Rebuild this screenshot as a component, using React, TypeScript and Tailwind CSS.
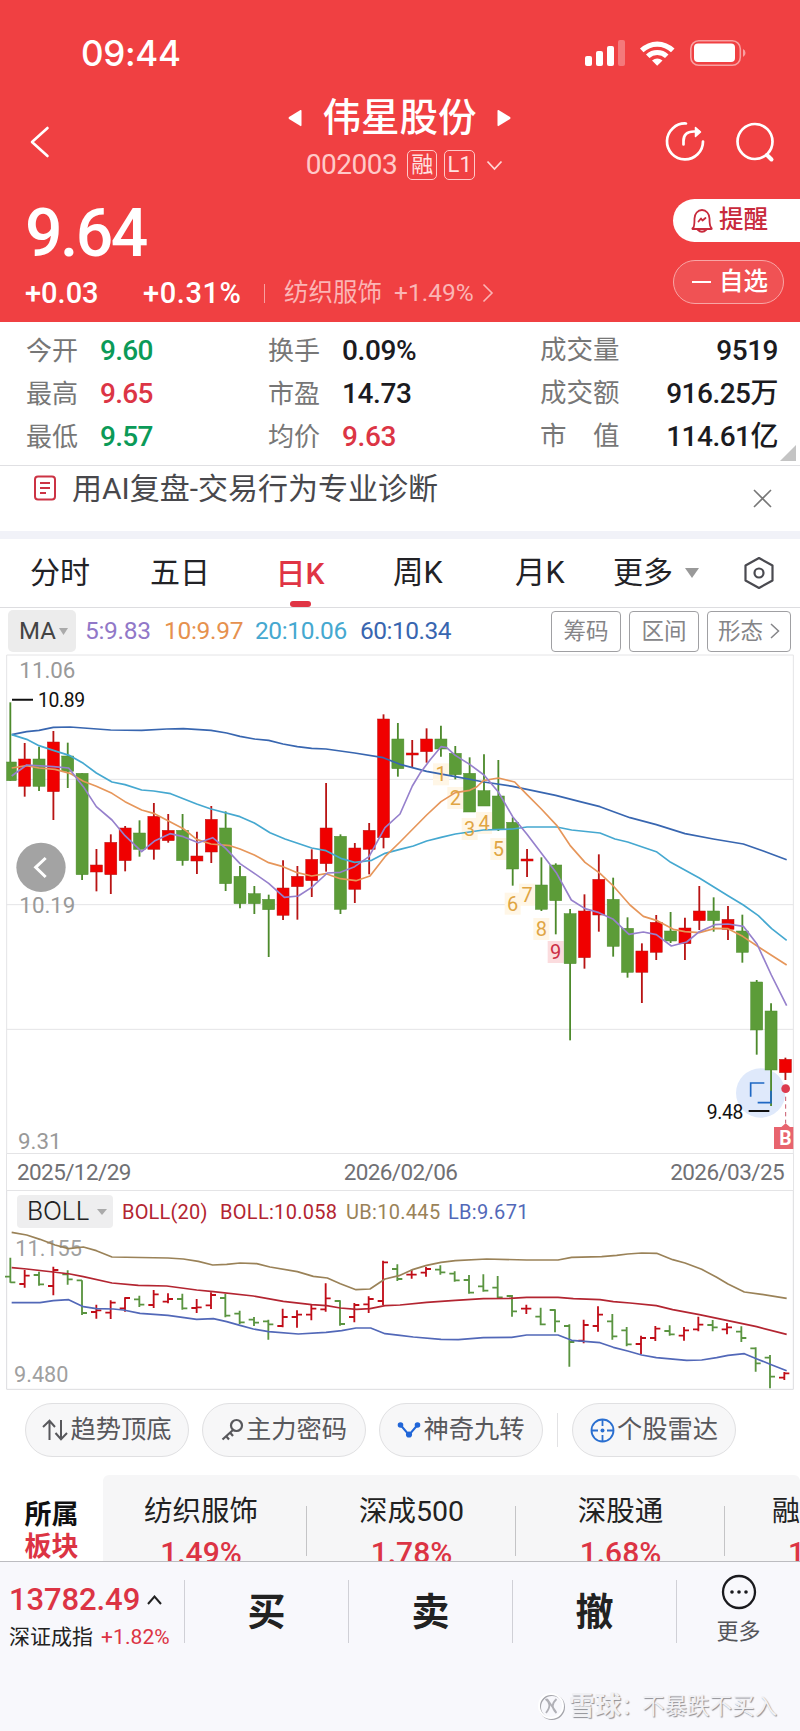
import type { ReactNode } from "react";

// Chart units are thirds of a pixel. Candle centres are evenly spaced.
const STEP = 43.06;
const FIRST = 31;
const UP = "#f00000";
const DOWN = "#5c9c38";

type Row = [dir: "r" | "g", a: number, b: number, c: number, d: number];

// high, body top, body bottom, low
const candles: Row[] = [
  ["g", 157, 336, 392, 392], ["r", 279, 327, 409, 440], ["g", 290, 327, 409, 423], ["r", 243, 276, 425, 510],
  ["g", 278, 318, 364, 414], ["g", 370, 370, 674, 690], ["r", 597, 645, 666, 724], ["r", 553, 577, 674, 732],
  ["r", 528, 534, 632, 664], ["g", 511, 549, 598, 620], ["r", 459, 499, 598, 629], ["r", 492, 541, 572, 578],
  ["g", 492, 541, 632, 647], ["r", 545, 618, 633, 672], ["r", 468, 508, 606, 639], ["g", 484, 534, 701, 723],
  ["g", 648, 679, 761, 775], ["g", 708, 731, 761, 792], ["g", 734, 748, 779, 921], ["r", 631, 714, 796, 810],
  ["r", 648, 679, 710, 809], ["r", 598, 628, 692, 741], ["r", 399, 534, 641, 665], ["g", 553, 559, 778, 792],
  ["r", 579, 594, 718, 759], ["r", 519, 541, 598, 673], ["r", 193, 207, 563, 595], ["g", 219, 267, 356, 380],
  ["r", 270, 309, 315, 352], ["r", 235, 267, 305, 338], ["g", 227, 267, 297, 320], ["g", 288, 310, 374, 388],
  ["g", 322, 370, 486, 486], ["g", 313, 422, 468, 468], ["g", 330, 438, 538, 543], ["g", 502, 517, 657, 707],
  ["r", 597, 627, 633, 681], ["g", 622, 705, 778, 783], ["g", 640, 645, 752, 853], ["g", 777, 791, 941, 1171],
  ["r", 733, 783, 923, 956], ["r", 613, 688, 795, 845], ["g", 683, 748, 889, 920], ["g", 802, 835, 967, 983],
  ["r", 880, 903, 967, 1059], ["r", 795, 817, 907, 930], ["g", 786, 843, 873, 879], ["r", 803, 834, 881, 930],
  ["r", 708, 783, 812, 840], ["g", 742, 783, 812, 845], ["r", 768, 808, 838, 870], ["g", 794, 843, 907, 938],
  ["g", 990, 996, 1140, 1214], ["g", 1060, 1083, 1260, 1368], ["r", 1223, 1228, 1268, 1290],
];

// high, low, open, close
const bars: Row[] = [
  ["g", 233, 308, 290, 307], ["r", 270, 323, 312, 287], ["g", 275, 317, 285, 313], ["r", 260, 346, 318, 270],
  ["g", 271, 314, 283, 298], ["g", 301, 405, 301, 399], ["r", 374, 416, 396, 391], ["r", 361, 417, 398, 368],
  ["r", 352, 395, 385, 354], ["g", 347, 381, 358, 374], ["r", 330, 384, 375, 343], ["r", 340, 370, 365, 357],
  ["g", 341, 389, 357, 385], ["r", 357, 399, 384, 382], ["r", 337, 387, 376, 345], ["g", 341, 412, 354, 407],
  ["g", 392, 432, 401, 427], ["g", 411, 438, 419, 428], ["g", 419, 479, 424, 433], ["r", 386, 442, 438, 411],
  ["r", 391, 443, 411, 404], ["r", 375, 421, 404, 386], ["r", 310, 395, 388, 355], ["g", 361, 437, 363, 432],
  ["r", 369, 427, 411, 375], ["r", 349, 399, 373, 357], ["r", 242, 375, 363, 247], ["g", 253, 303, 267, 297],
  ["r", 269, 296, 284, 284], ["r", 261, 290, 278, 267], ["g", 256, 284, 269, 277], ["g", 274, 305, 281, 301],
  ["g", 285, 341, 300, 338], ["g", 283, 335, 319, 332], ["g", 288, 354, 323, 352], ["g", 345, 410, 348, 394],
  ["r", 374, 402, 386, 386], ["g", 383, 436, 410, 433], ["g", 388, 457, 390, 424], ["g", 433, 560, 438, 486],
  ["r", 419, 490, 482, 435], ["r", 379, 455, 438, 404], ["g", 402, 479, 424, 469], ["g", 441, 499, 451, 493],
  ["r", 467, 522, 492, 474], ["r", 438, 483, 474, 446], ["g", 436, 467, 453, 463], ["r", 441, 482, 467, 451],
  ["r", 410, 454, 448, 434], ["g", 420, 454, 435, 442], ["r", 429, 463, 448, 442], ["g", 439, 486, 455, 474],
  ["g", 502, 575, 505, 550], ["g", 525, 625, 533, 590], ["r", 576, 600, 593, 580],
];

const maLines = [
  {
    color: "#3866b0",
    points:
      "35,254 80,245 117,241 160,232 210,231 332,240 425,241 500,237 550,236 633,241 680,249 720,259 763,267 806,271 849,282 892,290 935,295 978,297 1064,309 1150,323 1200,343 1280,364 1366,380 1452,396 1538,409 1667,436 1740,455 1800,470 1890,503 1969,524 2055,551 2140,567 2230,582 2290,603 2360,629",
  },
  {
    color: "#45a8d0",
    points:
      "35,254 80,268 117,287 160,301 210,317 250,340 289,369 336,396 375,404 425,420 461,423 512,431 590,462 633,477 720,500 763,519 810,548 855,567 935,594 978,602 1025,626 1064,637 1115,631 1155,610 1200,598 1240,588 1280,573 1323,562 1366,552 1450,540 1538,537 1581,531 1670,531 1715,540 1800,549 1845,567 1883,576 1969,605 2012,637 2098,684 2184,737 2230,765 2275,797 2315,836 2360,871",
  },
  {
    color: "#e6965a",
    points:
      "35,354 80,347 117,354 165,358 210,370 250,394 289,409 336,430 375,455 425,480 461,490 504,512 550,536 590,568 633,582 690,587 720,597 763,615 806,638 849,650 892,668 935,678 978,671 1021,686 1068,692 1110,678 1155,620 1200,576 1280,495 1323,455 1366,428 1409,421 1430,411 1450,392 1495,384 1544,396 1581,434 1624,477 1670,526 1710,586 1755,637 1800,670 1840,708 1890,765 1930,799 1969,811 2020,838 2055,845 2098,848 2145,835 2184,836 2228,859 2285,897 2360,945",
  },
  {
    color: "#9680cc",
    points:
      "35,378 80,345 160,350 206,354 250,410 289,470 336,510 375,557 425,605 465,572 510,551 550,560 595,578 638,563 677,595 720,641 763,670 806,700 853,742 895,738 935,712 982,669 1021,667 1064,650 1107,620 1155,533 1200,492 1237,408 1260,370 1290,330 1323,290 1340,293 1366,316 1409,343 1452,375 1495,426 1538,500 1581,553 1670,670 1714,750 1755,776 1797,788 1840,808 1887,853 1930,846 1969,854 2014,888 2060,876 2098,845 2145,824 2184,822 2230,829 2271,882 2314,975 2360,1067",
  },
];

const bollLines = [
  {
    color: "#9a8258",
    points:
      "35,157 80,165 120,178 165,195 206,206 250,201 289,212 336,231 504,234 550,237 595,244 638,255 680,253 720,249 770,251 810,261 892,275 940,289 982,294 1021,311 1068,329 1110,327 1155,297 1197,287 1240,268 1280,256 1323,247 1366,242 1460,237 1580,240 1674,240 1715,232 1805,230 1850,226 1883,222 1925,219 1970,220 2018,239 2055,249 2105,268 2150,292 2184,312 2233,336 2285,343 2360,355",
  },
  {
    color: "#b32531",
    points:
      "35,263 80,267 160,276 210,282 250,290 336,309 415,316 500,318 590,330 640,335 760,348 850,364 935,374 980,377 1021,384 1070,388 1110,386 1155,377 1200,375 1280,367 1366,361 1450,356 1530,355 1580,352 1674,352 1720,356 1800,359 1840,365 1890,369 1969,377 2018,389 2098,404 2184,422 2270,440 2360,463",
  },
  {
    color: "#5268b8",
    points:
      "35,368 120,368 160,362 206,359 250,380 289,386 340,387 370,390 420,400 504,406 590,418 640,416 680,425 720,436 760,447 806,455 895,462 978,457 1025,452 1068,444 1112,444 1155,461 1200,466 1240,471 1323,478 1375,479 1450,473 1535,472 1580,465 1674,465 1715,481 1800,488 1840,502 1883,513 1925,525 1969,533 2060,541 2105,540 2150,533 2184,526 2233,521 2271,537 2314,554 2360,572",
  },
];

// nine-turn counters under the candles
const turns = [
  { n: 1, x: 1323, y: 372 },
  { n: 2, x: 1366, y: 443 },
  { n: 3, x: 1409, y: 536 },
  { n: 4, x: 1452, y: 518 },
  { n: 5, x: 1495, y: 596 },
  { n: 6, x: 1538, y: 760 },
  { n: 7, x: 1581, y: 733 },
  { n: 8, x: 1624, y: 836 },
  { n: 9, x: 1667, y: 905 },
];

const stats = [
  ["今开", "9.60", "text-[#0b9a58]", "换手", "0.09%", "text-[#1b1b1f]", "成交量", "9519"],
  ["最高", "9.65", "text-[#dc3545]", "市盈", "14.73", "text-[#1b1b1f]", "成交额", "916.25万"],
  ["最低", "9.57", "text-[#0b9a58]", "均价", "9.63", "text-[#dc3545]", "市　值", "114.61亿"],
];

function StatusBar() {
  return (
    <div className="flex h-[90px] items-start justify-between pr-[54px] pl-[81px] pt-[36px]">
      <span className="font-['Inter'] text-[35px] leading-[35px] font-medium tracking-[-0.3px]">09:44</span>
      <svg width="161" height="28" viewBox="0 0 161 28" className="mt-[3px]" fill="#fff">
        <rect x="0" y="17" width="7" height="10" rx="2" />
        <rect x="11" y="12" width="7" height="15" rx="2" />
        <rect x="22" y="7" width="7" height="20" rx="2" />
        <rect x="33" y="1" width="7" height="26" rx="2" opacity=".3" />
        <path d="M55 9.500 A25 25 0 0 1 89.500 9.500 L86 13.200 A20 20 0 0 0 58.500 13.200 Z" />
        <path d="M61 15.500 A16.500 16.500 0 0 1 83.500 15.500 L80 19 A11.500 11.500 0 0 0 64.500 19 Z" />
        <path d="M67 21.500 Q72.200 17.500 77.500 21.500 L72.200 26.800 Z" />
        <rect x="105.800" y="1.800" width="49.500" height="24.500" rx="8" fill="none" stroke="#fff" strokeWidth="1.600" opacity=".5" />
        <rect x="109" y="4.500" width="41" height="18.500" rx="4" />
        <path d="M158 10 q2.500 1.200 2.500 4 t-2.500 4 z" opacity=".5" />
      </svg>
    </div>
  );
}

function TitleBar() {
  return (
    <div className="flex h-[100px] items-start justify-between pr-[25px] pl-[30px]">
      <svg width="20" height="32" viewBox="0 0 20 32" className="mt-[36px]" fill="none" stroke="#fff" strokeWidth="2.600" strokeLinecap="round" strokeLinejoin="round">
        <path d="M17.500 2 L2 16 L17.500 30" />
      </svg>
      <div className="ml-[84px] flex w-[300px] flex-col items-center">
        <div className="mt-[7px] flex h-[42px] items-center gap-[20px]">
          <svg width="14" height="18" viewBox="0 0 14 18" fill="#fff">
            <path d="M12.500 1 Q13.500 .5 13.500 2 V16 Q13.500 17.500 12.500 17 L1 10 Q0 9 1 8 Z" />
          </svg>
          <h1 className="text-[38.500px] leading-[42px] font-medium">伟星股份</h1>
          <svg width="14" height="18" viewBox="0 0 14 18" fill="#fff">
            <path d="M1.500 1 Q.5 .5 .5 2 V16 Q.5 17.500 1.500 17 L13 10 Q14 9 13 8 Z" />
          </svg>
        </div>
        <div className="mt-[11px] ml-[10px] flex h-[30px] items-center">
          <span className="text-[28px] leading-[30px] tracking-[-0.5px] text-[#ffc9c8]">002003</span>
          <span className="ml-[10px] flex size-[30px] items-center justify-center rounded-[5px] border border-[#ffc9c8] text-[22px] leading-none text-[#ffe0e0]">融</span>
          <span className="ml-[7px] flex h-[30px] w-[31px] items-center justify-center rounded-[5px] border border-[#ffc9c8] text-[22px] leading-none text-[#ffe0e0]">L1</span>
          <svg width="17" height="11" viewBox="0 0 17 11" className="ml-[11px]" fill="none" stroke="#ffd6d5" strokeWidth="1.800">
            <path d="M1.500 1.500 L8.500 9 L15.500 1.500" />
          </svg>
        </div>
      </div>
      <div className="mt-[31px] flex gap-[30px]">
        <svg width="40" height="42" viewBox="0 0 40 42" fill="none" stroke="#fff" strokeWidth="2.700" strokeLinecap="round" strokeLinejoin="round">
          <path d="M21 2.500 A18 18 0 1 0 38 20.500" />
          <path d="M18.500 23.500 V20 Q18.500 10.500 29 10.500 H34" />
          <path d="M30.500 6.500 L35.500 11 L30.500 15.500 Z" fill="#fff" strokeWidth="1.500" />
        </svg>
        <svg width="40" height="42" viewBox="0 0 40 42" fill="none" stroke="#fff" strokeLinecap="round">
          <circle cx="20" cy="20.500" r="17.500" strokeWidth="2.700" />
          <path d="M32 34 L36.500 38.500" strokeWidth="4" />
        </svg>
      </div>
    </div>
  );
}

function PriceBlock() {
  return (
    <div className="flex h-[132px] justify-between">
      <div className="pl-[25px]">
        <div className="mt-[9px] text-[66px] leading-[70px] font-medium tracking-[-2.500px]">9.64</div>
        <div className="mt-[7px] flex h-[34px] items-center leading-none">
          <span className="w-[118px] text-[29px] font-medium">+0.03</span>
          <span className="w-[121px] text-[29px] font-medium tracking-[0.6px]">+0.31%</span>
          <span className="h-[19px] w-px bg-[#f8a0a0]" />
          <span className="ml-[19px] text-[24.500px] text-[#fbb5b5]">纺织服饰</span>
          <span className="ml-[12px] text-[24.500px] text-[#fbb5b5]">+1.49%</span>
          <svg width="12" height="20" viewBox="0 0 12 20" className="ml-[8px]" fill="none" stroke="#fbb5b5" strokeWidth="1.600">
            <path d="M1.500 1.500 L10 10 L1.500 18.500" />
          </svg>
        </div>
      </div>
      <div className="flex w-[127px] flex-col gap-[18px] pt-[9px] text-[24.500px] leading-none">
        <div className="flex h-[43px] items-center rounded-l-full bg-white pl-[17px] font-medium text-[#c82a3c]">
          <svg width="24" height="26" viewBox="0 0 24 26" fill="none" stroke="#c82a3c" strokeWidth="1.800" strokeLinecap="round" strokeLinejoin="round">
            <path d="M3.500 19.500 Q4.500 17.500 4.500 10.500 A7.500 8.500 0 0 1 19.500 10.500 Q19.500 17.500 21 19.500 Q22.500 21 21 21 H3 Q1.500 21 3.500 19.500 Z" />
            <path d="M7.500 21.500 Q12 26 16.500 21.500" />
            <path d="M8.500 13.500 L11 10.500 L12.500 12.500 L15.500 10" />
          </svg>
          <span className="ml-[5px]">提醒</span>
        </div>
        <div className="flex h-[44px] w-[111px] items-center rounded-full border border-[#f8a5a5] bg-[#f05254] pl-[18px] font-medium text-white">
          <span className="h-[2px] w-[19px] bg-white" />
          <span className="ml-[8px]">自选</span>
        </div>
      </div>
    </div>
  );
}

function Stats() {
  return (
    <section className="relative flex h-[144px] flex-col border-b border-[#e0e0e3] pt-[7px]">
      {stats.map(([a, av, ac, b, bv, bc, c, cv]) => (
        <div key={a} className="flex h-[43px] items-center pr-[22px] pl-[26px] leading-none">
          <span className="w-[74px] text-[26px] text-[#777]">{a}</span>
          <span className={`w-[168px] text-[28px] font-medium tracking-[-0.7px] ${ac}`}>{av}</span>
          <span className="w-[74px] text-[26px] text-[#777]">{b}</span>
          <span className={`w-[198px] text-[28px] font-medium tracking-[-0.4px] ${bc}`}>{bv}</span>
          <span className="text-[26.500px] text-[#777]">{c}</span>
          <span className="ml-auto text-[28px] font-medium tracking-[-0.5px] text-[#1b1b1f]">{cv}</span>
        </div>
      ))}
      <svg width="16" height="16" viewBox="0 0 16 16" className="absolute right-[4px] bottom-[4px]">
        <path d="M16 0 V16 H0 Z" fill="#c4c4c4" />
      </svg>
    </section>
  );
}

function AiRow() {
  return (
    <section className="flex h-[65px] items-start pr-[28px] pl-[33px]">
      <svg width="24" height="27" viewBox="0 0 24 27" className="mt-[9px]" fill="none" stroke="#cc3344" strokeWidth="2">
        <rect x="2" y="1.500" width="20" height="23" rx="3" />
        <path d="M7 8 H17 M7 13 H17 M7 18 H13" />
      </svg>
      <span className="mt-[8px] ml-[15px] text-[30px] leading-[30px] text-[#48484c]">用AI复盘-交易行为专业诊断</span>
      <svg width="19" height="19" viewBox="0 0 19 19" className="mt-[23px] ml-auto" fill="none" stroke="#777" strokeWidth="1.600">
        <path d="M1 1 L18 18 M18 1 L1 18" />
      </svg>
    </section>
  );
}

function Tabs() {
  return (
    <nav className="flex h-[69px] items-center border-b border-[#dddde0] pl-[30px] text-[30px] leading-none text-[#222226]">
      <span className="w-[120px]">分时</span>
      <span className="w-[100px]">五日</span>
      <span className="flex h-full w-[100px] flex-col items-center justify-between pt-[20px]">
        <b className="font-medium text-[#e03444]">日K</b>
        <i className="h-[6px] w-[21px] rounded-full bg-[#e03444]" />
      </span>
      <span className="ml-[43px] w-[122px] text-[30.500px]">周K</span>
      <span className="w-[98px] text-[30.500px]">月K</span>
      <span>更多</span>
      <svg width="14" height="10" viewBox="0 0 14 10" className="ml-[12px]">
        <path d="M0 0 H14 L7 10 Z" fill="#999" />
      </svg>
      <svg width="32" height="34" viewBox="0 0 32 34" className="ml-[44px]" fill="none" stroke="#4a4a50" strokeWidth="2.200" strokeLinejoin="round">
        <path d="M16 2 L29.500 9.500 V24.500 L16 32 L2.500 24.500 V9.500 Z" />
        <circle cx="16" cy="17" r="4.500" />
      </svg>
    </nav>
  );
}

function PillButton({ className, children }: { className: string; children: ReactNode }) {
  return (
    <button type="button" className={`flex h-[41px] items-center justify-center rounded-[4px] border border-[#a0a0a3] text-[22.500px] leading-none text-[#858588] ${className}`}>
      {children}
    </button>
  );
}

function MaRow() {
  return (
    <div className="flex h-[46px] items-center pr-[9px] pl-[8px] text-[24.500px] leading-none">
      <span className="flex h-[42px] w-[68px] items-center gap-[3px] rounded-[5px] bg-[#ececec] pl-[11px] text-[24px] text-[#444]">
        MA
        <svg width="9" height="7" viewBox="0 0 9 7">
          <path d="M0 0 H9 L4.500 7 Z" fill="#aaa" />
        </svg>
      </span>
      <span className="ml-[9px] w-[79px] tracking-[-0.3px] text-[#9178c8]">5:9.83</span>
      <span className="w-[91px] tracking-[-0.3px] text-[#e6914e]">10:9.97</span>
      <span className="w-[105px] tracking-[-0.4px] text-[#45a8d0]">20:10.06</span>
      <span className="tracking-[-0.5px] text-[#3866b0]">60:10.34</span>
      <div className="ml-auto flex">
        <PillButton className="mr-[8px] w-[70px]">筹码</PillButton>
        <PillButton className="mr-[8px] w-[70px]">区间</PillButton>
        <PillButton className="w-[84px] gap-[7px]">
          形态
          <svg width="10" height="16" viewBox="0 0 10 16" fill="none" stroke="#858588" strokeWidth="1.500">
            <path d="M1 1 L8.500 8 L1 15" />
          </svg>
        </PillButton>
      </div>
    </div>
  );
}

function CandleChart() {
  return (
    <svg width="800" height="500" viewBox="0 12 2400 1500" className="block font-['Roboto']">
      <g fill="none" stroke="#e4e4e6" strokeWidth="3">
        <path d="M20 1512 V15 H2380 V1512" />
        <path d="M20 388 H2380 M20 764 H2380 M20 1138 H2380 M20 1510.500 H2380" />
      </g>
      <g fill="#999" fontSize="67">
        <text x="58" y="84">11.06</text>
        <text x="58" y="788">10.19</text>
        <text x="54" y="1497">9.31</text>
      </g>
      <circle cx="2282" cy="1329" r="74" fill="#dfe9fb" />
      {turns.map((t) => (
        <rect key={t.n} x={t.x - 24} y={t.y - 32} width="48" height="66" fill={t.n === 9 ? "#fbdcde" : "#fff6e6"} />
      ))}
      {candles.map(([dir, high, top, bottom, low], i) => {
        const x = FIRST + i * STEP;
        const left = Math.max(x - 18, 20);
        return (
          <g key={i} fill={dir === "r" ? UP : DOWN} stroke={dir === "r" ? "#b81414" : "#4d8a2c"}>
            <path d={`M${x} ${high} V${low}`} strokeWidth="5.500" />
            <rect x={left} y={top} width={x + 18 - left} height={bottom - top} strokeWidth="1.500" />
          </g>
        );
      })}
      {maLines.map((line) => (
        <polyline key={line.color} points={line.points} fill="none" stroke={line.color} strokeWidth="5" strokeLinejoin="round" />
      ))}
      <g fontSize="60" textAnchor="middle">
        {turns.map((t) => (
          <text key={t.n} x={t.x} y={t.y + 22} fill={t.n === 9 ? "#cc2e46" : "#dfa543"}>
            {t.n}
          </text>
        ))}
      </g>
      <path d="M36 149 H99 M2246 1383 H2308" stroke="#111" strokeWidth="6" />
      <g fill="#111" fontSize="58" letterSpacing="-1">
        <text x="114" y="171">10.89</text>
        <text x="2120" y="1407">9.48</text>
      </g>
      <path d="M2252 1340 V1299 H2293 M2273 1358 H2313 V1322" fill="none" stroke="#1f68c4" strokeWidth="5" />
      <circle cx="2357" cy="1316" r="13" fill="#dc3a4e" />
      <path d="M2357 1340 V1420" stroke="#c85a6c" strokeWidth="3" strokeDasharray="13 10" />
      <path d="M2322 1431 H2344 L2357 1420 L2370 1431 H2380 V1497 H2322 Z" fill="#e8646e" />
      <text x="2356" y="1484" fontSize="58" fontWeight="700" fill="#fff" textAnchor="middle">
        B
      </text>
      <circle cx="123" cy="652" r="74" fill="#a3a3a3" />
      <path d="M137 624 L107 652 L137 681" fill="none" stroke="#fff" strokeWidth="9" />
    </svg>
  );
}

function BollChart() {
  return (
    <section className="relative h-[199px]">
      <svg width="800" height="199" viewBox="0 33 2400 597" className="block font-['Roboto']">
        <path d="M20 33 V628 H2380 V33" fill="none" stroke="#dcdcdf" strokeWidth="3" />
        <g fill="#a0a0a0" fontSize="65">
          <text x="46" y="228">11.155</text>
          <text x="42" y="606">9.480</text>
        </g>
        {bars.map(([dir, high, low, open, close], i) => {
          const x = FIRST + i * STEP - i * 0.06;
          return (
            <path
              key={i}
              d={`M${x} ${high} V${low} M${x - 16} ${open} H${x} M${x} ${close} H${x + 15}`}
              stroke={dir === "r" ? "#c00d18" : "#5a9440"}
              strokeWidth="5.500"
            />
          );
        })}
        {bollLines.map((line) => (
          <polyline key={line.color} points={line.points} fill="none" stroke={line.color} strokeWidth="5" strokeLinejoin="round" />
        ))}
      </svg>
      <div className="absolute top-[4px] left-[17px] flex h-[33px] items-center text-[20px] leading-none tracking-[0.5px]">
        <span className="flex h-full w-[96px] items-center gap-[7px] rounded-[4px] bg-[#eeeeef] pl-[10px] font-['Inter'] text-[25px] font-light tracking-[-0.2px] text-[#222]">
          BOLL
          <svg width="10" height="6" viewBox="0 0 10 6">
            <path d="M0 0 H10 L5 6 Z" fill="#aaa" />
          </svg>
        </span>
        <span className="ml-[9px] w-[98px] tracking-[0.2px] text-[#b32531]">BOLL(20)</span>
        <span className="w-[126px] tracking-[0.3px] text-[#b32531]">BOLL:10.058</span>
        <span className="w-[102px] tracking-[0.3px] text-[#9a8258]">UB:10.445</span>
        <span className="tracking-[0.3px] text-[#5268b8]">LB:9.671</span>
      </div>
    </section>
  );
}

function Chip({ icon, label }: { icon: ReactNode; label: string }) {
  return (
    <button type="button" className="flex h-[54px] w-[164px] items-center justify-center rounded-full border border-[#e0e0e2] bg-[#f7f7f8] text-[25.300px] leading-none text-[#58585c]">
      {icon}
      <span className="ml-[2px]">{label}</span>
    </button>
  );
}

function Chips() {
  return (
    <section className="flex items-center pt-[13px] pl-[25px]">
      <Chip
        label="趋势顶底"
        icon={
          <svg width="26" height="22" viewBox="0 0 26 22" fill="none" stroke="#58585c" strokeWidth="2">
            <path d="M7.500 21 V2 M1 8 L7.500 1.800 L13 8 M19 1 V20 M13.500 14 L19 20.200 L25 14" />
          </svg>
        }
      />
      <div className="w-[13px]" />
      <Chip
        label="主力密码"
        icon={
          <svg width="23" height="24" viewBox="0 0 23 24" fill="none" stroke="#58585c" strokeWidth="2.200">
            <circle cx="15.500" cy="7.500" r="5.500" />
            <path d="M12 12 L1.500 21.500 M5 18 L8 21.500 M9 14.500 L12 18" />
          </svg>
        }
      />
      <div className="w-[13px]" />
      <Chip
        label="神奇九转"
        icon={
          <svg width="24" height="18" viewBox="0 0 24 18" fill="#2166d8" stroke="#2166d8" strokeWidth="1.600">
            <path d="M3.500 4 L12 14 L20.500 4" fill="none" strokeWidth="2" />
            <circle cx="3.500" cy="4" r="2" />
            <circle cx="12" cy="13.500" r="2.300" />
            <circle cx="20.500" cy="4" r="2" />
          </svg>
        }
      />
      <span className="mx-[14px] h-[34px] w-px bg-[#e2e2e4]" />
      <Chip
        label="个股雷达"
        icon={
          <svg width="25" height="25" viewBox="0 0 25 25" fill="none" stroke="#2a6fd0" strokeWidth="1.800">
            <circle cx="12.500" cy="12.500" r="11" />
            <path d="M12.500 1.500 V8 M12.500 17 V23.500 M1.500 12.500 H8 M17 12.500 H23.500" />
            <circle cx="12.500" cy="12.500" r="2" fill="#2a6fd0" stroke="none" />
          </svg>
        }
      />
    </section>
  );
}

const sectors = [
  { name: "纺织服饰", pct: "1.49%" },
  { name: "深成500", pct: "1.78%" },
  { name: "深股通", pct: "1.68%" },
];

function Sectors() {
  return (
    <section className="mt-[18px] flex h-[86px] overflow-hidden">
      <div className="flex w-[103px] shrink-0 flex-col items-center pt-[24px] text-[27px] leading-[32px] font-bold">
        <span className="text-[#111]">所属</span>
        <span className="text-[#dc3444]">板块</span>
      </div>
      <div className="flex flex-1 overflow-hidden rounded-t-[6px] bg-[#f6f6f7]">
        {sectors.map((s, i) => (
          <div key={s.name} className={`relative flex shrink-0 flex-col items-center pt-[22px] ${i === 0 ? "w-[204px] pr-[8px]" : "w-[209px]"}`}>
            <span className="text-[28.500px] leading-[30px] text-[#222]">{s.name}</span>
            <span className="mt-[10px] text-[30px] leading-[32px] font-medium text-[#dc3444]">{s.pct}</span>
            <i className="absolute top-[31px] right-0 h-[50px] w-px bg-[#c4c4c6]" />
          </div>
        ))}
        <div className="flex shrink-0 flex-col pt-[22px] pl-[47px]">
          <span className="text-[28px] leading-[30px] text-[#222]">融</span>
          <span className="mt-[10px] ml-[16px] text-[30px] leading-[32px] font-medium text-[#dc3444]">1</span>
        </div>
      </div>
    </section>
  );
}

function TradeButton({ label }: { label: string }) {
  return (
    <button type="button" className="flex h-[63px] w-[164px] items-center justify-center border-r border-[#d0d0d6] text-[38px] leading-none font-bold text-[#222]">
      {label}
    </button>
  );
}

function BottomBar() {
  return (
    <footer className="flex h-[170px] flex-col border-t border-[#bcbcc0] bg-[#f8f8fc]">
      <div className="flex h-[100px] items-start pt-[18px]">
        <div className="h-[63px] w-[185px] border-r border-[#d0d0d6] pl-[9px]">
          <div className="flex items-center pt-[3px]">
            <span className="text-[31px] leading-[34px] font-medium tracking-[-0.1px] text-[#dc3444]">13782.49</span>
            <svg width="15" height="10" viewBox="0 0 15 10" className="ml-[7px]" fill="none" stroke="#222" strokeWidth="2">
              <path d="M1 9 L7.500 1.500 L14 9" />
            </svg>
          </div>
          <div className="mt-[8px] flex text-[21px] leading-[24px] whitespace-nowrap">
            <span className="text-[#222]">深证成指</span>
            <span className="ml-[8px] tracking-[0.1px] text-[#dc3444]">+1.82%</span>
          </div>
        </div>
        <TradeButton label="买" />
        <TradeButton label="卖" />
        <TradeButton label="撤" />
        <div className="-mt-[6px] flex flex-1 flex-col items-center">
          <svg width="36" height="36" viewBox="0 0 36 36" fill="none" stroke="#1a1a1e" strokeWidth="2.300">
            <circle cx="18" cy="18" r="16" />
            <g fill="#1a1a1e" stroke="none">
              <circle cx="11" cy="18" r="1.800" />
              <circle cx="18" cy="18" r="1.800" />
              <circle cx="25" cy="18" r="1.800" />
            </g>
          </svg>
          <span className="mt-[9px] text-[22px] leading-[26px] text-[#55555a]">更多</span>
        </div>
      </div>
      <div className="mt-[30px] flex h-[28px] items-center justify-end pr-[23px] text-[22.500px] leading-none text-[#f1f1f4] [text-shadow:1px_1px_1px_#8e8e94]">
        <svg width="28" height="28" viewBox="0 0 28 28" fill="none">
          <circle cx="15" cy="15" r="12" stroke="#a4a4aa" strokeWidth="2" />
          <circle cx="14" cy="14" r="12" stroke="#fff" strokeWidth="2" />
          <path d="M8.500 7 Q16 12 9 21 M19.500 7 Q12 14 19.500 21 M10 7 L19 20" stroke="#b0b0b6" strokeWidth="1.800" />
        </svg>
        <span className="ml-[4px] text-[26px] font-bold">雪球</span>
        <span className="w-[21px]">：</span>
        <span>不暴跌不买入</span>
      </div>
    </footer>
  );
}

export default function App() {
  return (
    <main className="w-[800px] overflow-hidden bg-white font-['Roboto','Noto_Sans_CJK_SC',sans-serif]">
      <header className="h-[322px] bg-[#f04042] text-white">
        <StatusBar />
        <TitleBar />
        <PriceBlock />
      </header>
      <Stats />
      <AiRow />
      <div className="h-[8px] bg-[#f1f2f8]" />
      <Tabs />
      <MaRow />
      <CandleChart />
      <div className="mx-[6px] flex h-[37px] items-center justify-between border-x border-b border-[#e4e4e6] pr-[9px] pl-[10px] text-[22.500px] leading-none tracking-[-0.6px] text-[#707074]">
        <span>2025/12/29</span>
        <span>2026/02/06</span>
        <span>2026/03/25</span>
      </div>
      <BollChart />
      <Chips />
      <Sectors />
      <BottomBar />
    </main>
  );
}
